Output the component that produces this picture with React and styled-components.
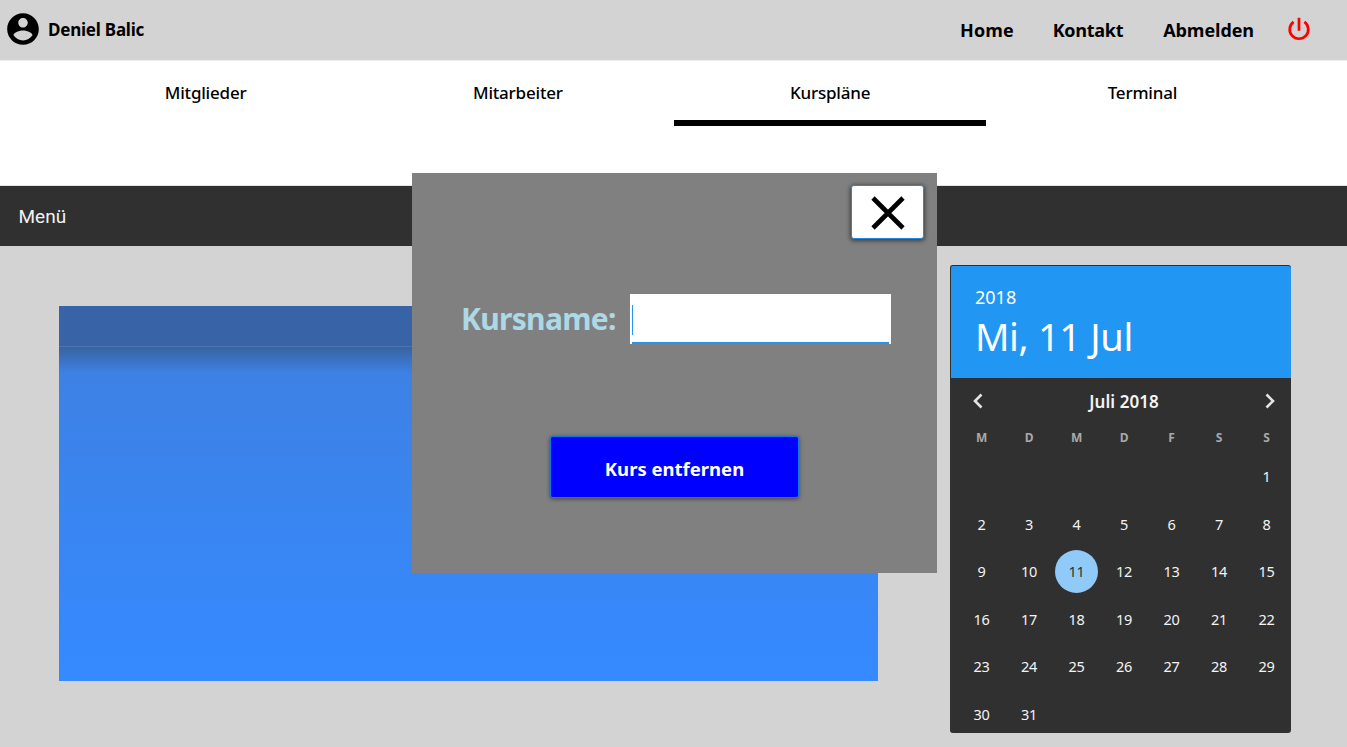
import React from 'react';
import styled, { createGlobalStyle } from 'styled-components';

const GlobalStyle = createGlobalStyle`
  *, *::before, *::after { box-sizing: border-box; }
  body {
    margin: 0;
    overflow: hidden;
    background: #d3d3d3;
    font-family: 'Segoe UI', 'Noto Sans', 'Open Sans', sans-serif;
    color: #000;
  }
`;

const Page = styled.div`
  position: relative;
  display: flex;
  flex-direction: column;
  height: 747px;
  overflow: hidden;
`;

const Header = styled.header`
  display: flex;
  align-items: center;
  justify-content: space-between;
  height: 60px;
  padding: 0 36px 0 4px;
  background: #d3d3d3;
`;

const User = styled.div`
  display: flex;
  align-items: center;
  gap: 6px;
  margin-top: -1px;
  font-size: 17px;
  font-weight: 700;
  letter-spacing: -0.22px;
`;

const AccountIcon = styled.svg`
  width: 38px;
  height: 38px;
  margin-top: -1px;
`;

const HeaderLinks = styled.nav`
  display: flex;
  align-items: center;
  font-family: 'Open Sans', sans-serif;
  font-size: 18px;
  font-weight: 700;
`;

const HeaderLink = styled.a`
  margin-right: ${({ $gap }) => $gap || 39}px;
  letter-spacing: ${({ $spacing }) => $spacing || 0}px;
`;

const PowerIcon = styled.svg`
  width: 24px;
  height: 24px;
  margin-top: -2px;
`;

const Tabs = styled.nav`
  display: grid;
  grid-template-columns: repeat(4, 1fr);
  align-items: start;
  height: 126px;
  padding: 0 49px;
  border-top: 1px solid #efefef;
  border-bottom: 1px solid #e4e4e4;
  background: #fff;
`;

const Tab = styled.a`
  height: 65px;
  padding: 20px 0 0 1px;
  border-bottom: 6px solid ${({ $active }) => ($active ? '#000' : 'transparent')};
  font-size: 17px;
  font-weight: 500;
  line-height: 24px;
  letter-spacing: -0.2px;
  text-align: center;
`;

const MenuBar = styled.div`
  display: flex;
  align-items: center;
  height: 60px;
  padding: 1px 18.5px 0;
  background: #303030;
  color: #f2f2f2;
  font-family: Roboto, sans-serif;
  font-size: 19px;
`;

const Content = styled.main`
  display: flex;
  flex: 1;
  align-items: flex-start;
`;

const Panel = styled.section`
  width: 819px;
  height: 375px;
  margin: 60px 72px 0 59px;
  background: linear-gradient(#3f7fdf, #358aff);
`;

const PanelHeader = styled.div`
  height: 41px;
  border-bottom: 1px solid #4f74ae;
  background: #3864a7;
`;

const PanelShade = styled.div`
  height: 26px;
  background: linear-gradient(#38639f, #3e81e4);
`;

const Calendar = styled.section`
  width: 341px;
  height: 468px;
  margin-top: 19px;
  overflow: hidden;
  border: solid #303030;
  border-width: 1px 0 0 1px;
  border-radius: 3px;
  background: #303030;
  color: #f4f4f4;
`;

const CalendarTop = styled.div`
  height: 112px;
  padding: 19px 24px 0;
  background: #2196f3;
  color: #fff;
`;

const Year = styled.div`
  font-size: 18px;
  line-height: 24px;
`;

const CurrentDate = styled.div`
  padding-top: 1px;
  font-size: 38px;
  line-height: 52px;
  letter-spacing: -0.35px;
`;

const MonthBar = styled.div`
  display: flex;
  align-items: center;
  justify-content: space-between;
  height: 48px;
  padding: 0 15px 2px 21px;
`;

const MonthName = styled.span`
  font-size: 17px;
  font-weight: 600;
  letter-spacing: 0.05px;
`;

const Chevron = styled.svg`
  width: 12px;
  height: 16px;
  margin-top: -1px;
  fill: none;
  stroke: #e3e3e3;
  stroke-width: 2.6;
`;

const Week = styled.div`
  display: grid;
  grid-template-columns: repeat(7, 47.5px);
  padding-left: 6.8px;
`;

const WeekDay = styled.span`
  height: 26.6px;
  font-size: 12px;
  font-weight: 700;
  line-height: 24px;
  color: #a9a9a9;
  text-align: center;
`;

const DayCell = styled.span`
  display: flex;
  align-items: center;
  justify-content: center;
  height: 47.5px;
`;

const Day = styled.span`
  display: flex;
  align-items: center;
  justify-content: center;
  width: 43px;
  height: 43px;
  border-radius: 50%;
  background: ${({ $selected }) => ($selected ? '#90caf9' : 'transparent')};
  color: ${({ $selected }) => ($selected ? '#303030' : '#f4f4f4')};
  font-size: 14.5px;
  letter-spacing: -0.2px;
`;

const Dialog = styled.form`
  position: absolute;
  top: 173px;
  left: 412px;
  display: flex;
  flex-direction: column;
  align-items: center;
  width: 525px;
  height: 400px;
  padding: 12px 13px 0;
  background: #808080;
`;

const CloseButton = styled.button`
  display: flex;
  align-items: center;
  justify-content: center;
  align-self: flex-end;
  width: 73px;
  height: 54px;
  padding: 1px 0 0;
  border: 1px solid #2389df;
  border-radius: 3px;
  background: #fff;
  box-shadow: 0 1px 4px 1px rgba(0, 0, 0, 0.5);
`;

const CloseIcon = styled.svg`
  width: 34px;
  height: 34px;
  stroke: #000;
  stroke-width: 4.6;
`;

const Field = styled.label`
  display: flex;
  align-items: center;
  align-self: flex-start;
  margin: 55px 0 92px 36px;
  color: #add8e6;
  font-size: 30px;
  font-weight: 700;
  letter-spacing: -0.7px;
`;

const FieldName = styled.span`
  width: 169px;
  padding-bottom: 2px;
`;

const Input = styled.span`
  display: block;
  width: 261px;
  height: 50px;
  padding: 11px 2px 0;
  background: #fff;
`;

const InputLine = styled.span`
  display: block;
  height: 39px;
  border-bottom: 2px solid #2196f3;
`;

const Caret = styled.span`
  display: block;
  width: 1px;
  height: 30px;
  background: #2196f3;
`;

const SubmitButton = styled.button`
  width: 249px;
  height: 62px;
  margin-right: 1px;
  padding: 3px 0 0 1px;
  border: 1px solid #1878e4;
  border-radius: 3px;
  background: #00f;
  box-shadow: 0 1px 4px rgba(0, 0, 0, 0.5);
  color: #fff;
  font-family: inherit;
  font-size: 18.5px;
  font-weight: 700;
`;

const tabs = ['Mitglieder', 'Mitarbeiter', 'Kurspläne', 'Terminal'];
const weekDays = ['M', 'D', 'M', 'D', 'F', 'S', 'S'];
const cells = [...Array(6).fill(null), ...Array.from({ length: 31 }, (_, i) => i + 1)];

export default function App() {
  return (
    <Page>
      <GlobalStyle />
      <Header>
        <User>
          <AccountIcon viewBox="0 0 24 24">
            <path d="M12 2C6.48 2 2 6.48 2 12s4.48 10 10 10 10-4.48 10-10S17.520 2 12 2zm0 3c1.660 0 3 1.340 3 3s-1.340 3-3 3-3-1.340-3-3 1.340-3 3-3zm0 14.200c-2.500 0-4.710-1.280-6-3.220.03-1.990 4-3.080 6-3.080 1.990 0 5.970 1.090 6 3.080-1.290 1.940-3.500 3.220-6 3.220z" />
          </AccountIcon>
          Deniel Balic
        </User>
        <HeaderLinks>
          <HeaderLink $spacing={0.1}>Home</HeaderLink>
          <HeaderLink $spacing={-0.3} $gap={40}>Kontakt</HeaderLink>
          <HeaderLink $spacing={-0.08} $gap={33}>Abmelden</HeaderLink>
          <PowerIcon viewBox="0 0 24 24" fill="none" stroke="#f00" strokeWidth="2.7">
            <path d="M12 .7v13M6.600 4.900a9.300 9.300 0 1 0 10.800 0" />
          </PowerIcon>
        </HeaderLinks>
      </Header>
      <Tabs>
        {tabs.map((name) => (
          <Tab key={name} $active={name === 'Kurspläne'}>{name}</Tab>
        ))}
      </Tabs>
      <MenuBar>Menü</MenuBar>
      <Content>
        <Panel>
          <PanelHeader />
          <PanelShade />
        </Panel>
        <Calendar>
          <CalendarTop>
            <Year>2018</Year>
            <CurrentDate>Mi, 11 Jul</CurrentDate>
          </CalendarTop>
          <MonthBar>
            <Chevron viewBox="0 0 12 16"><path d="M9.500 1.500 3 8l6.500 6.500" /></Chevron>
            <MonthName>Juli 2018</MonthName>
            <Chevron viewBox="0 0 12 16"><path d="M2.500 1.500 9 8l-6.500 6.500" /></Chevron>
          </MonthBar>
          <Week>
            {weekDays.map((name, i) => <WeekDay key={i}>{name}</WeekDay>)}
          </Week>
          <Week>
            {cells.map((day, i) => (
              <DayCell key={i}>{day && <Day $selected={day === 11}>{day}</Day>}</DayCell>
            ))}
          </Week>
        </Calendar>
      </Content>
      <Dialog>
        <CloseButton type="button" aria-label="Schließen">
          <CloseIcon viewBox="0 0 34 34"><path d="M2 2l30 30M32 2L2 32" /></CloseIcon>
        </CloseButton>
        <Field>
          <FieldName>Kursname:</FieldName>
          <Input><InputLine><Caret /></InputLine></Input>
        </Field>
        <SubmitButton type="button">Kurs entfernen</SubmitButton>
      </Dialog>
    </Page>
  );
}
